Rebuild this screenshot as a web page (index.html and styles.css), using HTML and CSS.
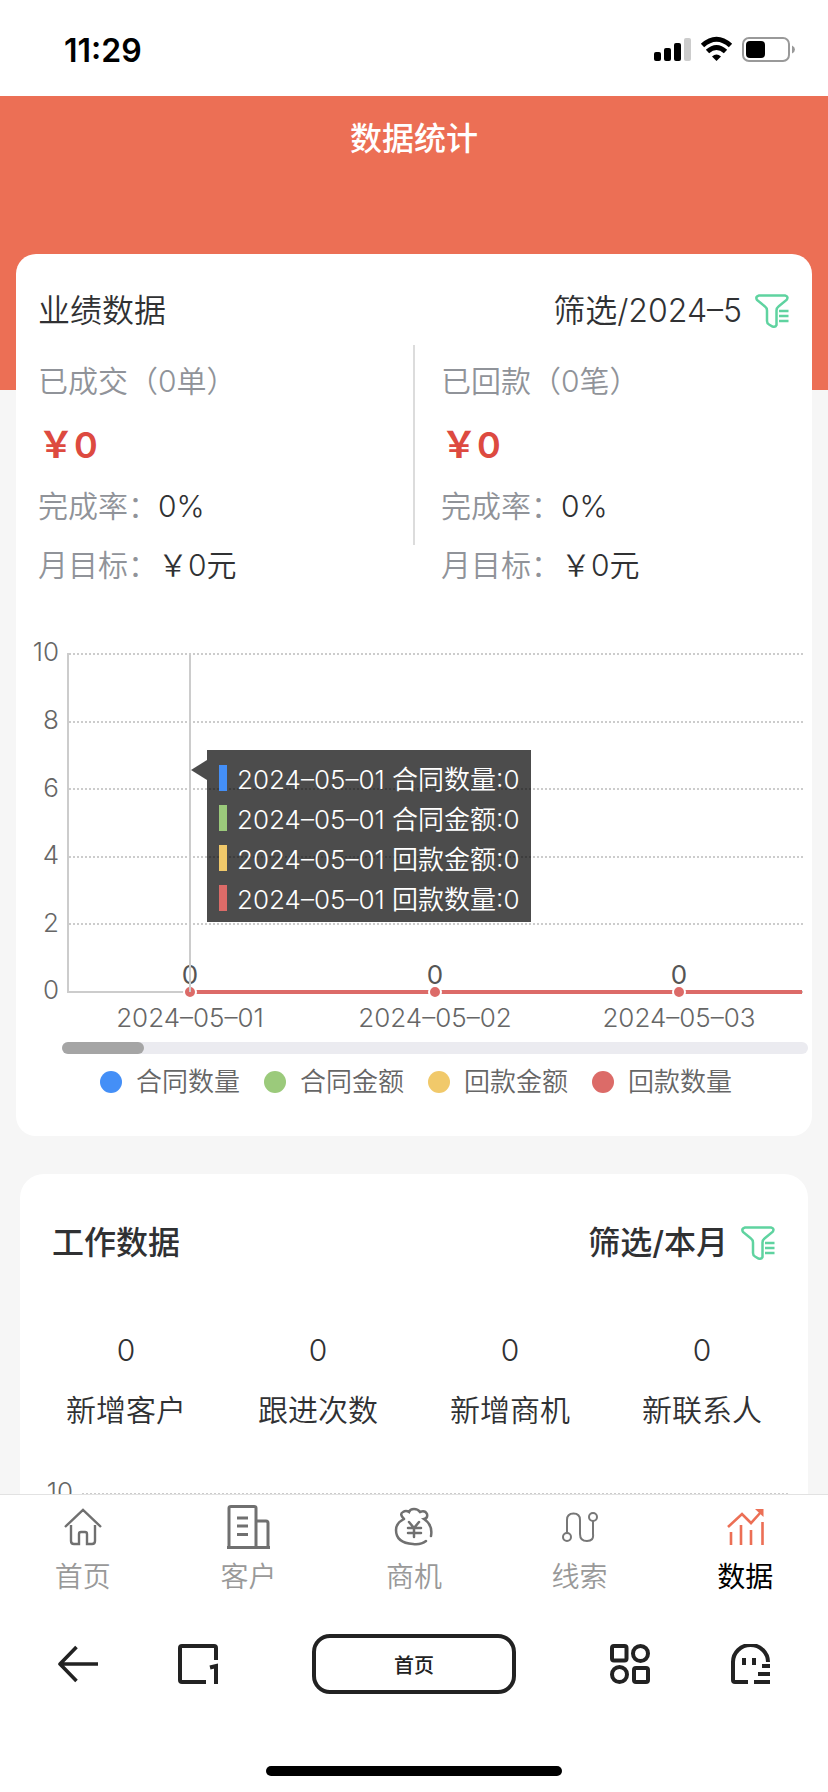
FILE: index.html
```html
<!DOCTYPE html>
<html lang="zh-CN">
<head>
<meta charset="utf-8">
<meta name="viewport" content="width=device-width, initial-scale=1">
<title>数据统计</title>
<link rel="stylesheet" href="styles.css">
</head>
<body>
<svg class="defs" aria-hidden="true">
  <symbol id="filter" viewBox="0 0 36 36">
    <path d="M5 2.500H31Q35 3.500 32.500 7L24.500 13.500Q22.500 15 22.500 17.500V32Q21.500 34.500 18.500 33.500L15 31.500Q13 30.500 13 28V17.500Q13 15 11 13.500L3 7Q1 3.500 5 2.500ZM25 18H34.500M25 23H34.500M25 28H34.500" fill="none" stroke="#5fd3a0" stroke-width="2.500"/>
  </symbol>
</svg>
<div class="app">
  <div class="status">
    <time class="clock">11:29</time>
    <svg class="signals" viewBox="0 0 144 30" aria-hidden="true">
      <rect x="1" y="17" width="7" height="9" rx="2"/>
      <rect x="11" y="13" width="7" height="13" rx="2"/>
      <rect x="21" y="8" width="7" height="18" rx="2"/>
      <rect x="31" y="3" width="7" height="23" rx="2" fill="#ccc"/>
      <path d="M49.500 10.500Q63.500-2 77.500 10.500M54.500 16.500Q63.500 8.500 72.500 16.500" fill="none" stroke="#000" stroke-width="5"/>
      <path d="M59 21.500Q63.500 17.500 68 21.500L63.500 26Z"/>
      <rect x="90" y="3" width="46" height="23" rx="6" fill="none" stroke="#999" stroke-width="2"/>
      <rect x="93" y="6" width="19" height="17" rx="4"/>
      <path d="M139 10.500Q142 12 142 14.500T139 18.500Z" fill="#999"/>
    </svg>
  </div>

  <main class="page">
    <header class="banner"><h1>数据统计</h1></header>

    <section class="card sales">
      <div class="card-head">
        <h2>业绩数据</h2>
        <button class="filter" type="button">筛选/2024–5<svg class="filter-icon" aria-hidden="true"><use href="#filter"/></svg></button>
      </div>
      <div class="totals">
        <div class="total">
          <p class="caption">已成交（0单）</p>
          <p class="money">￥0</p>
          <p class="line"><span>完成率：</span>0%</p>
          <p class="line"><span>月目标：</span>￥0元</p>
        </div>
        <div class="divider"></div>
        <div class="total">
          <p class="caption">已回款（0笔）</p>
          <p class="money">￥0</p>
          <p class="line"><span>完成率：</span>0%</p>
          <p class="line"><span>月目标：</span>￥0元</p>
        </div>
      </div>

      <div class="chart">
        <svg class="plot" viewBox="0 0 796 404" role="img" aria-label="业绩折线图">
          <path class="grid" d="M53 24H787M53 92H787M53 159H787M53 227H787M53 294H787"/>
          <path class="axis" d="M52 23V362H787"/>
          <g class="label end">
            <text x="43" y="31">10</text><text x="43" y="99">8</text><text x="43" y="167">6</text>
            <text x="43" y="234">4</text><text x="43" y="302">2</text><text x="43" y="369">0</text>
          </g>
          <path d="M174 362H786" stroke="#dc6b68" stroke-width="4"/>
          <g fill="#dc6b68" stroke="#fff" stroke-width="2">
            <circle cx="174" cy="362" r="6"/><circle cx="419" cy="362" r="6"/><circle cx="663" cy="362" r="6"/>
          </g>
          <g class="label value">
            <text x="174" y="354">0</text><text x="419" y="354">0</text><text x="663" y="354">0</text>
          </g>
          <path class="axis" d="M174 24V362"/>
          <g class="label mid">
            <text x="174" y="397">2024–05–01</text><text x="419" y="397">2024–05–02</text><text x="663" y="397">2024–05–03</text>
          </g>
        </svg>
        <ul class="tooltip">
          <li><i class="blue"></i>2024–05–01 合同数量:0</li>
          <li><i class="green"></i>2024–05–01 合同金额:0</li>
          <li><i class="yellow"></i>2024–05–01 回款金额:0</li>
          <li><i class="red"></i>2024–05–01 回款数量:0</li>
        </ul>
      </div>
      <div class="track"><div class="thumb"></div></div>
      <ul class="legend">
        <li><i class="blue"></i>合同数量</li>
        <li><i class="green"></i>合同金额</li>
        <li><i class="yellow"></i>回款金额</li>
        <li><i class="red"></i>回款数量</li>
      </ul>
    </section>

    <section class="card work">
      <div class="card-head">
        <h2>工作数据</h2>
        <button class="filter" type="button">筛选/本月<svg class="filter-icon" aria-hidden="true"><use href="#filter"/></svg></button>
      </div>
      <dl class="counts">
        <div><dd>0</dd><dt>新增客户</dt></div>
        <div><dd>0</dd><dt>跟进次数</dt></div>
        <div><dd>0</dd><dt>新增商机</dt></div>
        <div><dd>0</dd><dt>新联系人</dt></div>
      </dl>
      <svg class="plot" viewBox="0 0 788 60" role="img" aria-label="工作折线图">
        <text class="label end" x="53" y="25">10</text>
        <path class="grid" d="M62 18H769"/>
      </svg>
    </section>
  </main>

  <nav class="tabs">
    <a href="#home">
      <svg viewBox="0 0 48 48" aria-hidden="true"><g fill="none" stroke="#707070" stroke-width="2"><path d="M6 24 24 7 42 24M12 22V38Q12 41 15 41H20V31Q20 29 22 29H26Q28 29 28 31V41H33Q36 41 36 38V22" stroke-width="2.400"/></g></svg>
      首页</a>
    <a href="#customers">
      <svg viewBox="0 0 48 48" aria-hidden="true"><path d="M3 44.500H46M5 44V5Q5 3.500 7 3.500H30Q32 3.500 32 5V44M32 18H42Q44 18 44 20V44M13 15H24M13 23H24M13 31.500H24" fill="none" stroke="#707070" stroke-width="3"/></svg>
      客户</a>
    <a href="#deals">
      <svg viewBox="0 0 48 48" aria-hidden="true"><g fill="none" stroke="#707070" stroke-width="2.500" stroke-linecap="round"><path d="M14 16Q9 11 13 9Q16 7 19 9Q20 6 24 6T30 9Q35 7 37 11Q38 15 34 16Q43 22 41 33M36 38Q31 42 23 41Q6 40 6 27Q6 20 14 16"/><path d="M19 19 24 25 29 19M18 25H31M18 30H31M24 25V34"/></g></svg>
      商机</a>
    <a href="#leads">
      <svg viewBox="0 0 48 48" aria-hidden="true"><g fill="none" stroke="#777" stroke-width="2"><circle cx="11" cy="34" r="4"/><circle cx="37" cy="14" r="4"/><path d="M11 30V17Q11 10.500 17.500 10.500T24 17V31Q24 38 31 38T37 31V18"/></g></svg>
      线索</a>
    <a class="active" href="#data">
      <svg viewBox="0 0 48 48" aria-hidden="true"><g fill="none" stroke="#ec6f55" stroke-width="2.600"><path d="M7 24 21 11 30 20 40 9M10 29V42M20 22V42M30 27V42M41.500 19V42"/></g><path d="M34 6H42.500V14Z" fill="#ec6f55"/></svg>
      数据</a>
  </nav>

  <div class="browser">
    <div class="tools">
      <button type="button" aria-label="返回"><svg viewBox="0 0 40 40"><path d="M40 20H2M18.500 3 2 20 18.500 37" fill="none" stroke="#222" stroke-width="3.600" stroke-linejoin="round"/></svg></button>
      <button type="button" aria-label="标签页"><svg viewBox="0 0 40 40"><path d="M38 16V4Q38 2 36 2H4Q2 2 2 4V36Q2 38 4 38H28" fill="none" stroke="#222" stroke-width="4"/><path d="M32 23.500 38 22V40" fill="none" stroke="#222" stroke-width="4"/></svg></button>
    </div>
    <button class="address" type="button">首页</button>
    <div class="tools">
      <button type="button" aria-label="应用"><svg viewBox="0 0 40 40"><g fill="none" stroke="#222" stroke-width="4"><rect x="2" y="2" width="14.500" height="14.500" rx="2"/><circle cx="30.500" cy="9.500" r="7.500"/><circle cx="9.500" cy="30.500" r="7.500"/><rect x="24" y="24" width="14" height="14" rx="2"/></g></svg></button>
      <button type="button" aria-label="我的"><svg viewBox="0 0 40 40"><path d="M38 18A17.500 17 0 0 0 3 18V36Q3 38 5 38H18M24 38H40M28 30H40M32 22H40M14 14V21M24 14V21" fill="none" stroke="#222" stroke-width="4"/></svg></button>
    </div>
  </div>
  <div class="home-bar"></div>
</div>
</body>
</html>
```
FILE: styles.css
```css
* { box-sizing: border-box; }
body, h1, h2, p, ul, dl, dd { margin: 0; }
ul { padding: 0; list-style: none; }

body {
  background: #fff;
  color: #303133;
  font-family: Inter, "Noto Sans CJK SC", sans-serif;
  font-weight: 350;
}

button {
  padding: 0;
  border: 0;
  background: none;
  color: inherit;
  font: inherit;
}

.defs { display: none; }

.app {
  display: flex;
  flex-direction: column;
  height: 100vh;
}

.status {
  display: flex;
  justify-content: space-between;
  align-items: center;
  height: 96px;
  padding: 4px 31px 0 64px;
}
.clock {
  color: #000;
  font-size: 32px;
  font-weight: 600;
}
.signals { width: 144px; height: 30px; }

.page {
  flex: 1;
  min-height: 0;
  overflow-y: auto;
  scrollbar-width: none;
  background: #f6f6f6;
}
.banner {
  height: 294px;
  padding-top: 20px;
  background: #ec6f55;
  color: #fff;
  text-align: center;
}
.banner h1 {
  font-size: 32px;
  font-weight: 500;
  line-height: 46px;
}

.card { background: #fff; }
.card-head {
  display: flex;
  justify-content: space-between;
  align-items: center;
  height: 46px;
  font-size: 32px;
  line-height: 42px;
}
.card-head h2 {
  font-size: 32px;
  font-weight: inherit;
}
.filter {
  display: flex;
  align-items: center;
  gap: 12px;
}
.filter-icon { width: 36px; height: 36px; }

.sales {
  margin: -136px 16px 0;
  padding: 34px 0;
  border-radius: 20px;
}
.sales .card-head { padding: 0 22px; }
.totals {
  display: grid;
  grid-template-columns: 1fr 2px 1fr;
  margin-top: 11px;
  padding: 0 22px;
}
.total { padding-top: 4px; font-size: 30px; }
.divider { height: 200px; background: #dcdcdc; }
.divider + .total { padding-left: 26px; }
.caption { color: #909399; line-height: 64px; }
.money {
  color: #dd4a40;
  font-size: 36px;
  font-weight: 600;
  line-height: 64px;
}
.line { line-height: 59px; }
.line span { color: #909399; }

.chart { position: relative; margin-top: 35px; }
.plot { display: block; width: 100%; }
.grid {
  fill: none;
  stroke: #ccc;
  stroke-width: 2;
  stroke-dasharray: 2 2;
}
.axis {
  fill: none;
  stroke: #ccc;
  stroke-width: 2;
}
.label {
  fill: #666;
  font-size: 26px;
}
.end { text-anchor: end; }
.mid, .value { text-anchor: middle; }
.value { fill: #555; font-weight: 400; }

.tooltip {
  position: absolute;
  top: 120px;
  left: 24%;
  padding: 10px 12px 2px;
  background: rgba(0, 0, 0, .7);
  color: #fff;
  font-size: 26px;
  line-height: 40px;
  white-space: nowrap;
}
.tooltip::before {
  content: "";
  position: absolute;
  top: 10px;
  right: 100%;
  border: solid transparent;
  border-width: 10px 16px 10px 0;
  border-right-color: rgba(0, 0, 0, .7);
}
.tooltip li { display: flex; gap: 10px; }
.tooltip i { width: 8px; height: 26px; margin-top: 5px; }

.blue { background: #448ff7; }
.green { background: #9bca7b; }
.yellow { background: #f1c96a; }
.red { background: #dc6b68; }

.track {
  height: 12px;
  margin: 8px 4px 0 46px;
  border-radius: 6px;
  background: #ebebf0;
}
.thumb {
  width: 11%;
  height: 12px;
  border-radius: 6px;
  background: #a5a5a5;
}
.legend {
  display: flex;
  justify-content: center;
  gap: 24px;
  margin-top: 8px;
  padding-left: 4px;
  color: #666;
  font-size: 26px;
  line-height: 40px;
}
.legend li { display: flex; align-items: center; gap: 14px; }
.legend i { width: 22px; height: 22px; border-radius: 50%; }

.work {
  margin: 38px 20px 0;
  padding: 46px 0 40px;
  border-radius: 24px;
}
.work .card-head { padding: 0 32px; font-weight: 500; }
.counts {
  display: grid;
  grid-template-columns: repeat(4, 1fr);
  margin: 54px 10px 36px;
  font-size: 30px;
  line-height: 60px;
  text-align: center;
}
.counts div { display: flex; flex-direction: column; }

.tabs {
  display: grid;
  grid-template-columns: repeat(5, 1fr);
  height: 120px;
  border-top: 1px solid #e2e2e2;
  background: #fff;
}
.tabs a {
  display: flex;
  flex-direction: column;
  align-items: center;
  padding-top: 8px;
  color: #999;
  font-size: 28px;
  line-height: 52px;
  text-decoration: none;
}
.tabs svg { width: 48px; height: 48px; }
.tabs .active { color: #000; font-weight: 400; }

.browser {
  display: flex;
  justify-content: space-between;
  align-items: center;
  height: 100px;
  padding: 0 58px;
}
.tools { display: flex; gap: 80px; }
.tools svg { display: block; width: 40px; height: 40px; }
.address {
  width: 204px;
  height: 60px;
  border: 4px solid #222;
  border-radius: 18px;
  color: #222;
  font-size: 20px;
  font-weight: 500;
}

.home-bar {
  width: 296px;
  height: 10px;
  margin: 52px auto 16px;
  border-radius: 5px;
  background: #000;
}
```
